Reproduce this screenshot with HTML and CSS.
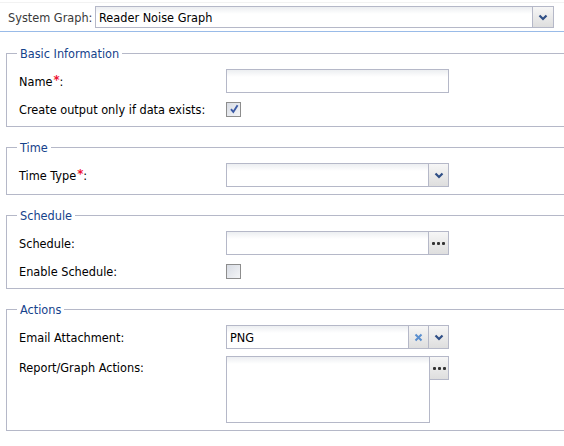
FILE: index.html
```html
<!DOCTYPE html>
<html>
<head>
<meta charset="utf-8">
<link rel="stylesheet" href="styles.css">
</head>
<body>
<div class="page">
  <div class="topbar">
    <span class="top-label">System Graph:</span>
    <div class="field top-combo">
      <span class="field-text">Reader Noise Graph</span>
      <span class="trigger trigger-top"><svg width="10" height="7" viewBox="0 0 10 7"><path d="M1.5 1.5 L5 5 L8.5 1.5" fill="none" stroke="#2f4f86" stroke-width="2.2"/></svg></span>
    </div>
  </div>
  <div class="sep"></div>

  <fieldset class="fs">
    <legend>Basic Information</legend>
    <div class="row field-row">
      <label class="lbl">Name<span class="req">*</span>:</label>
      <div class="field w223"></div>
    </div>
    <div class="row check-row">
      <label class="lbl">Create output only if data exists:</label>
      <span class="check"><svg width="12" height="12" viewBox="0 0 12 12"><path d="M3 6.2 L5.3 9 L9.6 2.2" fill="none" stroke="#3b5aa5" stroke-width="1.9"/></svg></span>
    </div>
  </fieldset>

  <fieldset class="fs">
    <legend>Time</legend>
    <div class="row field-row">
      <label class="lbl">Time Type<span class="req">*</span>:</label>
      <div class="field w223">
        <span class="field-text"></span>
        <span class="trigger"><svg width="10" height="7" viewBox="0 0 10 7"><path d="M1.5 1.5 L5 5 L8.5 1.5" fill="none" stroke="#2f4f86" stroke-width="2.2"/></svg></span>
      </div>
    </div>
  </fieldset>

  <fieldset class="fs">
    <legend>Schedule</legend>
    <div class="row field-row">
      <label class="lbl">Schedule:</label>
      <div class="field w223">
        <span class="field-text"></span>
        <span class="trigger"><span class="dots"><i></i><i></i><i></i></span></span>
      </div>
    </div>
    <div class="row check-row">
      <label class="lbl">Enable Schedule:</label>
      <span class="check"></span>
    </div>
  </fieldset>

  <fieldset class="fs">
    <legend>Actions</legend>
    <div class="row field-row">
      <label class="lbl">Email Attachment:</label>
      <div class="field w223">
        <span class="field-text">PNG</span>
        <span class="trigger"><svg width="9" height="9" viewBox="0 0 9 9"><path d="M1.5 1.5 L7.5 7.5 M7.5 1.5 L1.5 7.5" fill="none" stroke="#5b8fcf" stroke-width="2"/></svg></span>
        <span class="trigger"><svg width="10" height="7" viewBox="0 0 10 7"><path d="M1.5 1.5 L5 5 L8.5 1.5" fill="none" stroke="#2f4f86" stroke-width="2.2"/></svg></span>
      </div>
    </div>
    <div class="row area-row">
      <label class="lbl lbl-top">Report/Graph Actions:</label>
      <div class="area-wrap">
        <div class="area"></div>
        <span class="trigger trigger-btn"><span class="dots"><i></i><i></i><i></i></span></span>
      </div>
    </div>
  </fieldset>
</div>
</body>
</html>
```

FILE: styles.css
```css
html, body {
  margin: 0;
  padding: 0;
  background: #fff;
  overflow: hidden;
}
body {
  font-family: "DejaVu Sans Condensed", "DejaVu Sans", sans-serif;
  font-size: 12.6px;
  color: #000;
}
.page {
  width: 564px;
  height: 446px;
  overflow: hidden;
  border-top: 1px solid #f2f2f2;
  margin-top: 2px;
}
.topbar {
  display: flex;
  align-items: center;
  height: 22px;
  margin-top: 3px;
  padding-left: 8px;
}
.top-label {
  width: 87px;
  color: #3a3a3a;
}
.field {
  box-sizing: border-box;
  display: flex;
  height: 24px;
  border: 1px solid #b5b8c8;
  background: linear-gradient(#eceef1, #ffffff 7px);
}
.top-combo {
  width: 459px;
  height: 22px;
}
.field-text {
  flex: 1;
  display: flex;
  align-items: center;
  padding-left: 3px;
}
.trigger {
  box-sizing: border-box;
  width: 20px;
  border-left: 1px solid #b5b8c8;
  background: linear-gradient(#f6f6f6, #dedede);
  display: flex;
  align-items: center;
  justify-content: center;
}
.trigger-top {
  width: 21px;
}
.dots {
  display: flex;
  gap: 2px;
}
.dots i {
  width: 3px;
  height: 3px;
  background: #333;
  border-radius: 1px;
}
.sep {
  height: 1px;
  background: #99bbe8;
  margin-top: 3px;
}
.fs {
  width: 600px;
  margin: 14px 0 13px 6px;
  padding: 8px 0 7px 12px;
  border: 1px solid #b5b8c8;
  box-sizing: border-box;
}
.fs + .fs {
  margin-top: 0;
}
.fs legend {
  color: #15428b;
  padding: 0 3px;
  margin-left: -2px;
  line-height: 15px;
  height: 15px;
}
.row {
  display: flex;
  align-items: center;
}
.field-row {
  height: 24px;
}
.check-row {
  height: 20px;
  margin-top: 6px;
}
.area-row {
  align-items: flex-start;
  margin-top: 7px;
}
.lbl {
  width: 207px;
  flex: none;
}
.lbl-top {
  padding-top: 4px;
}
.req {
  color: #ee1133;
  font-size: 13px;
  font-weight: bold;
  position: relative;
  top: -2px;
  margin-left: 1px;
}
.w223 {
  width: 223px;
}
.check {
  box-sizing: border-box;
  width: 15px;
  height: 15px;
  border: 1px solid #8d8d8d;
  background: linear-gradient(135deg, #d8dce4, #f4f5f7);
  display: flex;
  align-items: center;
  justify-content: center;
}
.area-wrap {
  display: flex;
  align-items: flex-start;
}
.area {
  box-sizing: border-box;
  width: 204px;
  height: 67px;
  border: 1px solid #b5b8c8;
  background: linear-gradient(#eceef1, #ffffff 7px);
}
.trigger-btn {
  height: 24px;
  border: 1px solid #b5b8c8;
  border-left: none;
  width: 19px;
}
```
